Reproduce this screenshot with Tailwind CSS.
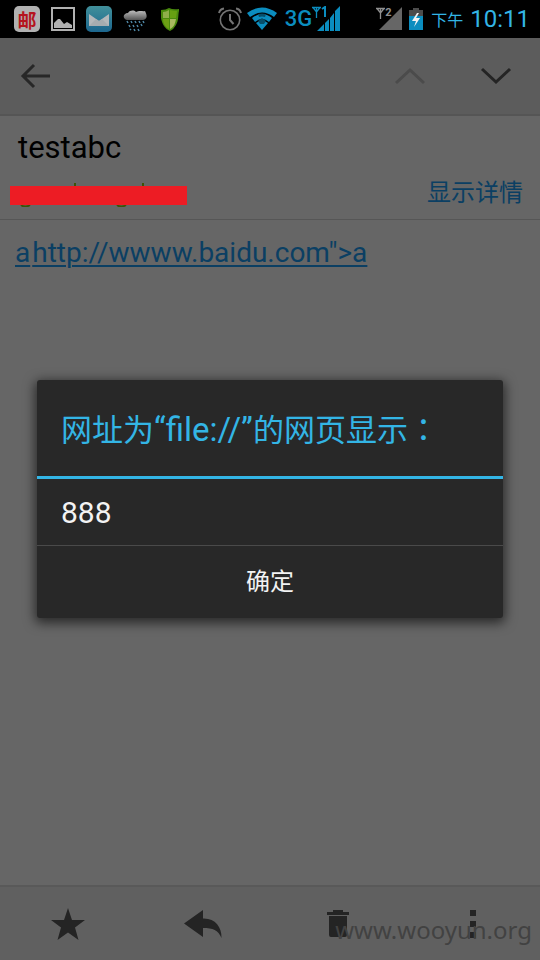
<!DOCTYPE html>
<html lang="zh-CN">
<head>
<meta charset="utf-8">
<meta name="viewport" content="width=device-width, initial-scale=1">
<title>testabc</title>
<script src="https://cdn.jsdelivr.net/npm/@tailwindcss/browser@4"></script>
</head>
<body class="min-h-screen flex flex-col bg-[#666666] font-[Roboto,'Noto_Sans_CJK_SC',sans-serif]">

<!-- Status bar -->
<div class="h-[38px] shrink-0 bg-black flex items-center justify-between pl-[14px] pr-[10px]">
  <div class="flex items-center gap-[11px]">
    <span class="size-[26px] rounded-[5px] bg-[#b1b1b1] flex items-center justify-center text-[#b5141e] text-[19px] leading-none font-bold font-['Noto_Sans_CJK_SC',sans-serif]">邮</span>
    <svg class="w-6 h-[26px]" viewBox="0 0 24 26"><rect x="1" y="2" width="22" height="22" fill="none" stroke="#b1b1b1" stroke-width="2"/><path d="M3 22V17L7 13L9 13L13 18L16 16L21 19V22Z" fill="#b1b1b1"/></svg>
    <svg class="size-[26px]" viewBox="0 0 26 26"><defs><linearGradient id="mail" x1="0" y1="0" x2="0" y2="1"><stop offset="0" stop-color="#41909b"/><stop offset="1" stop-color="#1c668e"/></linearGradient></defs><rect width="26" height="26" rx="5" fill="url(#mail)"/><path d="M3 8L13 15L23 8V20H3Z" fill="#b4b8bb"/><path d="M3 20L10 13L13 15L16 13L23 20Z" fill="#a6acb0"/></svg>
    <svg class="w-6 h-[26px]" viewBox="0 0 24 26"><defs><linearGradient id="cloud" x1="0" y1="0" x2="0" y2="1"><stop offset="0" stop-color="#bdbdbd"/><stop offset="1" stop-color="#555"/></linearGradient></defs><path d="M4 14C-1 13 0 7 5 7C7 4 11 4 13 6C17 4 20 6 22 5C24 9 25 13 20 14Z" fill="url(#cloud)"/><path d="M4 15l1 2M8 15l1 2M12 15l1 2M16 15l1 2M20 15l1 2M6 19l1 2M10 19l1 2M14 19l1 2M18 18l1 2M7 23l1 1M11 23l1 2M15 23l1 2" stroke="#4f87a5" stroke-width="1.500"/></svg>
    <svg class="ml-[2px] w-5 h-[26px]" viewBox="0 0 20 26"><path d="M9 2Q13 4 19 3V5C18 8 19 14 16 19Q14 23 10 25C5 23 2 18 1 12V4Q6 4 9 2Z" fill="#4a8a0d"/><path d="M9 4V12H3V6Q6 6 9 4Z" fill="#8fae4a"/><path d="M10 4Q14 5 17 5L16 12H10Z" fill="#67a012"/><path d="M3 13H9V23C5 21 3 17 3 13Z" fill="#6da015"/><path d="M10 13H16C15 18 14 21 10 23Z" fill="#a9b95f"/></svg>
  </div>
  <div class="flex items-center">
    <svg class="size-6" viewBox="0 0 24 24" fill="none" stroke="#747474" stroke-width="1.6"><circle cx="12" cy="13" r="9.7"/><path d="M12 7V13L15.500 17M1 6Q2 2 6 1.500M23 6Q22 2 18 1.500" stroke-width="2"/></svg>
    <svg class="ml-[5px] w-[30px] h-6" viewBox="0 0 30 24"><path d="M0 6Q15 -5 30 6L27 10Q15 1 3 10Z" fill="#0b8dbf"/><path d="M5 11Q15 3 25 11L22 15Q15 9 8 15Z" fill="#0b8dbf"/><path d="M9 16Q15 11 21 16L15 23Z" fill="#0b8dbf"/><path d="M11 7Q15 6 19 7L18 10Q15 9 12 10ZM11 14L15 11L19 14L17 17H13Z" fill="#064f6b"/></svg>
    <span class="ml-2 text-[22px] leading-6 font-medium text-[#0b8dbf]">3G</span>
    <svg class="w-7 h-[26px]" viewBox="0 0 28 26" fill="#0b8dbf"><path d="M0 1.500H9M1 1.500L4.500 6L8 1.500M4.500 1V12" fill="none" stroke="#0b8dbf" stroke-width="1.300"/><path d="M10 3L13 1V11" fill="none" stroke="#0b8dbf" stroke-width="2"/><path d="M5 25L12 18V25ZM13 17L17 13V25H13ZM18 12L22 7V25H18ZM23 5L28 0V25H23Z"/></svg>
    <span class="ml-9 flex relative">
      <svg class="w-[26px] h-6" viewBox="0 0 26 24"><path d="M3 23L26 0V23Z" fill="#666"/><path d="M0 1.500H9M1 1.500L4.500 6L8 1.500M4.500 1V12" fill="none" stroke="#909090" stroke-width="1.300"/></svg>
      <span class="absolute left-[9px] top-0 text-[11px] leading-[11px] font-bold text-[#909090]">2</span>
    </span>
    <svg class="ml-[7px] w-[14px] h-6" viewBox="0 0 14 24"><path d="M4 1H10V3H14V9H0V3H4Z" fill="#4c4c4c"/><path d="M0 9H14V23H0Z" fill="#0b8dbf"/><path d="M8 6L3 14H7L5 20L11 11H7L10 6Z" fill="#f3f3f3"/></svg>
    <span class="ml-2 pt-1 text-base leading-5 text-[#33b5e5]">下午</span>
    <span class="ml-[7px] text-2xl leading-6 text-[#33b5e5]">10:11</span>
  </div>
</div>

<div class="relative grow flex flex-col">
  <!-- Toolbar -->
  <header class="h-[78px] shrink-0 bg-[#5c5c5c] border-b-2 border-[#555555] flex items-center justify-between pl-5 pr-7">
    <button type="button" aria-label="返回"><svg class="w-[31px] h-[26px]" viewBox="0 0 31 26" fill="none" stroke="#272727" stroke-width="3"><path d="M14 2L3 13L14 24M3 13H30"/></svg></button>
    <div class="flex gap-[54px]">
      <button type="button" aria-label="上一封" disabled><svg class="w-8 h-[18px]" viewBox="0 0 32 18" fill="none" stroke="#4b4b4b" stroke-width="3"><path d="M2 16L16 3L30 16"/></svg></button>
      <button type="button" aria-label="下一封"><svg class="w-8 h-[18px]" viewBox="0 0 32 18" fill="none" stroke="#242424" stroke-width="3"><path d="M2 2L16 15L30 2"/></svg></button>
    </div>
  </header>

  <!-- Message -->
  <main class="grow">
    <section class="h-[104px] border-b border-[#565656] pl-[18px] pr-[17px]">
      <h1 class="pt-3 text-[31px] leading-10 text-black">testabc</h1>
      <div class="flex items-center justify-between pt-px">
        <svg class="-ml-2 mt-1 w-[178px] h-6" viewBox="0 0 178 24" role="img" aria-label="发件人"><path d="M11 22Q15 25 20 22M107 22Q111 25 116 22M65 0V3M133 0V3" fill="none" stroke="#3c5307" stroke-width="2"/><rect y="3" width="177" height="19" fill="#ed1c24"/></svg>
        <a href="#" class="text-2xl leading-[48px] text-[#0b3f63]">显示详情</a>
      </div>
    </section>
    <p class="pl-[15px] pt-4 text-[28px] leading-[34px] text-[#0b3f63]"><a href="#" class="underline decoration-2 underline-offset-3">a</a><a href="#" class="ml-[2px] underline decoration-2 underline-offset-3">http://wwww.baidu.com"&gt;a</a></p>
  </main>

  <!-- Actions -->
  <footer class="relative h-[75px] shrink-0 bg-[#606060] border-t-2 border-[#595959] grid grid-cols-4">
    <button type="button" aria-label="星标" class="flex items-center justify-center"><svg class="w-[34px] h-8" viewBox="0 0 34 32" fill="#242424"><path d="M17 0L21 12H34L24 19.500L27.500 32L17 24.500L6.500 32L10 19.500L0 12H13Z"/></svg></button>
    <button type="button" aria-label="回复" class="flex items-center justify-center"><svg class="w-[38px] h-[28px]" viewBox="0 0 38 28" fill="#242424"><path d="M0 13.500L19 0V8.500C31 8 38 17 37.500 28C34 20 29 18 19 18V27Z"/></svg></button>
    <button type="button" aria-label="删除" class="flex items-center justify-center"><svg class="w-[22px] h-[27px]" viewBox="0 0 22 27" fill="#242424"><path d="M6 0H16V2H22V5H0V2H6ZM2 6H20V25Q20 27 18 27H4Q2 27 2 25Z"/></svg></button>
    <button type="button" aria-label="更多" class="flex items-center justify-center"><svg class="w-[6px] h-7" viewBox="0 0 6 28" fill="#242424"><path d="M0 0H6V6H0ZM0 11H6V17H0ZM0 22H6V28H0Z"/></svg></button>
    <span class="absolute right-2 bottom-3 text-2xl leading-9 text-[#424242] font-['Noto_Sans',sans-serif]">www.wooyun.org</span>
  </footer>

  <!-- Alert dialog -->
  <div class="absolute inset-0 flex items-center px-[37px]">
    <div role="alertdialog" aria-labelledby="dialog-title" aria-describedby="dialog-text" class="w-full rounded-[3px] bg-[#282828] shadow-[0_3px_12px_2px_rgba(0,0,0,0.6)]">
      <h2 id="dialog-title" class="h-[99px] border-b-3 border-[#33b5e5] px-6 pt-7 text-[31px] leading-10 text-[#33b5e5] whitespace-nowrap">网址为<span class="text-[33px]">“file://”</span>的网页显示<span lang="zh-TW" class="font-['Noto_Sans_CJK_TC',sans-serif]">：</span></h2>
      <p id="dialog-text" class="px-6 pt-[14px] pb-3 text-[30px] leading-10 text-[#f3f3f3]">888</p>
      <button type="button" class="w-full h-[73px] border-t border-[#4a4a4a] text-2xl text-[#f3f3f3]">确定</button>
    </div>
  </div>
</div>
</body>
</html>
